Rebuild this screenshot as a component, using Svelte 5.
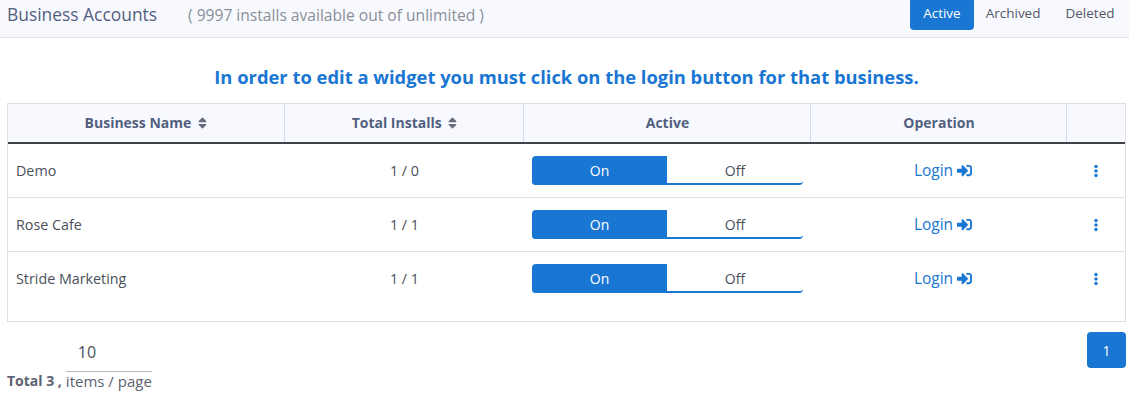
<script>
    let businesses = [
        { name: "Demo", installs: "1 / 0" },
        { name: "Rose Cafe", installs: "1 / 1" },
        { name: "Stride Marketing", installs: "1 / 1" },
    ];
    let tabs = ["Active", "Archived", "Deleted"];
</script>

{#snippet sortIcon()}
    <svg class="sort" viewBox="0 0 320 512" width="9" height="14" aria-hidden="true">
        <path d="M41 288h238c21.400 0 32.100 25.900 17 41L177 448c-9.400 9.400-24.600 9.400-33.900 0L24 329c-15.100-15.100-4.400-41 17-41zM296 183L177 64c-9.400-9.400-24.600-9.400-33.900 0L24 183c-15.100 15.100-4.400 41 17 41h238c21.400 0 32.100-25.900 17-41z" />
    </svg>
{/snippet}

<div class="page">
    <header class="topbar">
        <div class="titles">
            <span class="title">Business Accounts</span>
            <span class="subtitle">( 9997 installs available out of unlimited )</span>
        </div>
        <nav class="tabs">
            {#each tabs as tab, i}
                <button class="tab" class:selected={i === 0}>{tab}</button>
            {/each}
        </nav>
    </header>

    <h2 class="notice">In order to edit a widget you must click on the login button for that business.</h2>

    <div class="table-wrap">
        <table>
            <colgroup>
                <col style="width: 276px" />
                <col style="width: 239px" />
                <col style="width: 287px" />
                <col style="width: 256px" />
                <col />
            </colgroup>
            <thead>
                <tr>
                    <th>Business Name {@render sortIcon()}</th>
                    <th>Total Installs {@render sortIcon()}</th>
                    <th>Active</th>
                    <th>Operation</th>
                    <th></th>
                </tr>
            </thead>
            <tbody>
                {#each businesses as business}
                    <tr>
                        <td class="name">{business.name}</td>
                        <td class="center">{business.installs}</td>
                        <td class="switch-cell">
                            <div class="toggle">
                                <span class="on">On</span>
                                <span class="off">Off</span>
                            </div>
                        </td>
                        <td class="center">
                            <a class="login" href="#login">
                                Login
                                <svg viewBox="0 0 512 512" width="15" height="15" aria-hidden="true">
                                    <path d="M416 448h-84c-6.600 0-12-5.400-12-12v-40c0-6.600 5.400-12 12-12h84c17.700 0 32-14.300 32-32V160c0-17.700-14.300-32-32-32h-84c-6.600 0-12-5.400-12-12V76c0-6.600 5.400-12 12-12h84c53 0 96 43 96 96v192c0 53-43 96-96 96zm-47-201L201 79c-15-15-41-4.500-41 17v96H24c-13.300 0-24 10.700-24 24v96c0 13.300 10.700 24 24 24h136v96c0 21.500 26 32 41 17l168-168c9.300-9.400 9.300-24.600 0-34z" />
                                </svg>
                            </a>
                        </td>
                        <td class="center">
                            <svg class="dots" viewBox="0 0 4 14" width="4" height="14" aria-hidden="true">
                                <circle cx="2" cy="2.500" r="1.700" />
                                <circle cx="2" cy="7" r="1.700" />
                                <circle cx="2" cy="11.500" r="1.700" />
                            </svg>
                        </td>
                    </tr>
                {/each}
            </tbody>
        </table>
    </div>

    <footer class="bottom">
        <div class="summary">
            <strong>Total 3 ,</strong>
            <div class="page-size">
                <span class="size-value">10</span>
                <span class="size-label">items / page</span>
            </div>
        </div>
        <button class="page-btn">1</button>
    </footer>
</div>

<style>
    :global(body) {
        margin: 0;
        background: #fff;
    }

    .page {
        font-family: "Open Sans", "Noto Sans", sans-serif;
        color: #525f7f;
        height: 401px;
        overflow: hidden;
    }

    .topbar {
        display: flex;
        justify-content: space-between;
        height: 37px;
        padding: 0 2px 0 7px;
        background: #f8f9fe;
        border-bottom: 1px solid #e1e3e9;
    }

    .titles {
        display: flex;
        align-items: baseline;
        padding-top: 2px;
    }

    .title {
        font-size: 17.400px;
        color: #525f7f;
        width: 181px;
    }

    .subtitle {
        font-size: 15.600px;
        color: #8a8f98;
    }

    .tabs {
        display: flex;
        align-items: flex-start;
    }

    .tab {
        height: 30px;
        border: none;
        background: none;
        padding: 0 12.500px 5px;
        font: inherit;
        font-size: 13.500px;
        color: #525866;
        border-radius: 0 0 4px 4px;
    }

    .tab.selected {
        padding: 0 13.500px 5px;
        margin: 0 -1px 0 1px;
        background: #1976d2;
        color: #fff;
    }

    .notice {
        margin: 0;
        height: 65px;
        padding: 27px 0 0 4px;
        box-sizing: border-box;
        text-align: center;
        font-size: 18.360px;
        line-height: 24px;
        font-weight: 700;
        color: #1976d2;
    }

    .table-wrap {
        margin: 0 3px 0 7px;
        border: 1px solid #dfe0e3;
        height: 219px;
        box-sizing: border-box;
    }

    table {
        width: 100%;
        border-collapse: collapse;
        table-layout: fixed;
    }

    th {
        height: 39px;
        padding: 0 0 1px;
        box-sizing: border-box;
        background: #f8f9fe;
        border-left: 1px solid #d8dbe6;
        border-bottom: 2px solid #3e4147;
        font-size: 14px;
        font-weight: 700;
        color: #525f7f;
    }

    th + th {
        padding-left: 2px;
    }

    th:first-child {
        border-left: none;
    }

    .sort {
        fill: #666e7d;
        vertical-align: -2px;
        margin-left: 3px;
    }

    td {
        height: 53px;
        padding: 0 8px;
        border-bottom: 1px solid #e1e1e1;
        font-size: 14.300px;
        color: #4a4f5a;
    }

    tbody tr:last-child td {
        border-bottom: none;
    }

    .center {
        padding-left: 10px;
        text-align: center;
    }

    .switch-cell {
        padding-left: 9px;
    }

    .toggle {
        display: flex;
        width: 271px;
        height: 29px;
        border-bottom: 2px solid #1976d2;
        border-radius: 0 0 4px 4px;
        box-sizing: border-box;
        font-size: 14px;
        line-height: 29px;
    }

    .toggle span {
        text-align: center;
    }

    .on {
        width: 135px;
        height: 29px;
        background: #1976d2;
        color: #fff;
        border-radius: 4px 0 0 4px;
    }

    .off {
        flex: 1;
        color: #4a4f5a;
    }

    .login {
        display: inline-flex;
        align-items: center;
        gap: 4px;
        margin-left: 8px;
        color: #1976d2;
        text-decoration: none;
        font-size: 15.500px;
        line-height: 18px;
    }

    .login svg,
    .dots {
        fill: #1976d2;
    }

    .dots {
        vertical-align: middle;
        margin: 0 2px 2px 0;
    }

    .bottom {
        display: flex;
        justify-content: space-between;
        align-items: flex-start;
        margin: 10px 3px 0 7px;
    }

    .summary {
        display: flex;
        align-items: flex-end;
        gap: 4px;
        font-size: 14px;
    }

    .summary strong {
        color: #5b6270;
        line-height: 19px;
    }

    .page-size {
        display: flex;
        flex-direction: column;
        width: 86px;
    }

    .size-value {
        height: 39px;
        line-height: 41px;
        padding-left: 12px;
        border-bottom: 1px solid #b9b9b9;
        font-size: 16px;
        color: #4a4f5a;
    }

    .size-label {
        line-height: 18px;
        font-size: 15px;
        color: #5b6270;
        white-space: nowrap;
    }

    .page-btn {
        width: 39px;
        height: 36px;
        border: none;
        border-radius: 4px;
        background: #1976d2;
        color: #fff;
        font: inherit;
        font-size: 14px;
    }
</style>
